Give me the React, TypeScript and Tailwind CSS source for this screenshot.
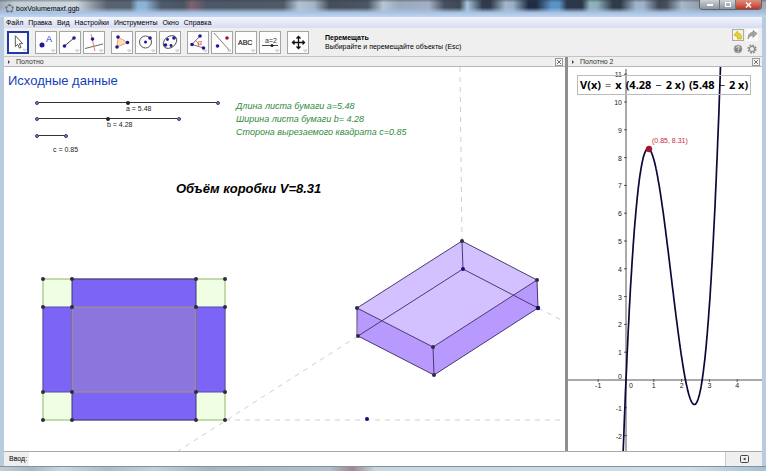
import { useState } from "react";
import type { ReactNode } from "react";

const menu = ["Файл", "Правка", "Вид", "Настройки", "Инструменты", "Окно", "Справка"];

const BLUE = "#1c1a94";
const LINE = "#444";

interface Tool {
  name: string;
  icon: ReactNode;
}

const Dot = ({ x, y, fill = BLUE, r = 1.8 }: { x: number; y: number; fill?: string; r?: number }) => (
  <circle cx={x} cy={y} r={r} fill={fill} />
);

const toolGroups: Tool[][] = [
  [{ name: "Перемещать", icon: <path d="M8 4v12l2.700-2.400 1.900 4.200 1.800-.9-1.900-4 3.700-.2z" fill="#fff" stroke="#333" strokeWidth="0.9" /> }],
  [
    {
      name: "Точка",
      icon: (
        <>
          <Dot x={7} y={14} r={2.5} />
          <text x="11" y="11" fontSize="9" fill="#2a2ae0">A</text>
        </>
      ),
    },
    {
      name: "Прямая",
      icon: (
        <>
          <path d="M5.500 15 15 7" stroke={LINE} />
          <Dot x={5.5} y={15} />
          <Dot x={15} y={7} />
        </>
      ),
    },
    {
      name: "Перпендикуляр",
      icon: (
        <>
          <path d="M2 17.500 20 13" stroke={LINE} strokeWidth="0.8" />
          <path d="M8 3l4 17" stroke="#e0606a" strokeWidth="0.8" />
          <Dot x={9.5} y={8} />
        </>
      ),
    },
  ],
  [
    {
      name: "Многоугольник",
      icon: (
        <>
          <path d="M7 6l9.500 5.500L6 16z" fill="#ffe0b0" stroke="#e08a70" strokeWidth="0.8" />
          <Dot x={7} y={6} />
          <Dot x={16.5} y={11.5} />
          <Dot x={6} y={16} />
        </>
      ),
    },
    {
      name: "Окружность",
      icon: (
        <>
          <circle cx="10.500" cy="11" r="6" fill="none" stroke={LINE} strokeWidth="0.9" />
          <Dot x={10.5} y={11} r={1.5} />
          <Dot x={15} y={7} />
        </>
      ),
    },
    {
      name: "Эллипс",
      icon: (
        <>
          <ellipse cx="11" cy="11" rx="7.500" ry="5.500" transform="rotate(-40 11 11)" fill="none" stroke={LINE} strokeWidth="0.9" />
          <Dot x={6.5} y={14} />
          <Dot x={12} y={14.5} r={1.4} />
          <Dot x={15} y={7} />
          <Dot x={8.5} y={8.5} r={1.4} />
        </>
      ),
    },
  ],
  [
    {
      name: "Угол",
      icon: (
        <>
          <path d="M13 5 5 13.500l12 3.500" fill="none" stroke="#555" strokeWidth="0.8" />
          <path d="M8.500 9.500q3.500 1.500 3 6" fill="none" stroke="#e05050" strokeWidth="0.8" />
          <text x="11" y="13.500" fontSize="7" fill="#d33">α</text>
          <Dot x={13} y={5} />
          <Dot x={5} y={13.5} />
          <Dot x={16.5} y={17} />
        </>
      ),
    },
    {
      name: "Отражение",
      icon: (
        <>
          <path d="M3 2l16 18" stroke="#666" strokeWidth="0.8" />
          <Dot x={6.5} y={15} />
          <Dot x={16} y={7} fill="#a01838" />
        </>
      ),
    },
    {
      name: "Текст",
      icon: <text x="3" y="13.500" fontSize="7" fill="#222" stroke="#222" strokeWidth="0.2">ABC</text>,
    },
    {
      name: "Ползунок",
      icon: (
        <>
          <text x="6" y="11.500" fontSize="7" fill="#333">a=2</text>
          <path d="M3 14.500h16" stroke="#333" strokeWidth="0.9" />
          <Dot x={13} y={14.5} r={1.5} fill="#222" />
        </>
      ),
    },
  ],
  [
    {
      name: "Переместить полотно",
      icon: (
        <path
          d="M11.500 6v11M6 11.500h11M9.500 7.500l2-2 2 2M9.500 15.500l2 2 2-2M7.500 9.500l-2 2 2 2M15.500 9.500l2 2-2 2"
          fill="none"
          stroke="#111"
          strokeWidth="1.3"
        />
      ),
    },
  ],
];

const sliders = [
  { id: "a", label: "a = 5.48", min: 0, max: 10.96, value: 5.48, box: "left-[33px] top-[31px] w-[181px]", text: "left-[122px] top-[37px]", thumb: true },
  { id: "b", label: "b = 4.28", min: 0, max: 8.56, value: 4.28, box: "left-[33px] top-[47px] w-[142px]", text: "left-[103px] top-[53px]", thumb: true },
  { id: "c", label: "c = 0.85", min: 0, max: 0.85, value: 0.85, box: "left-[33px] top-[64px] w-[29px]", text: "left-[49px] top-[78px]", thumb: false },
];

// net of the box: outer sheet and the four cut lines
const NX = [39, 68, 192, 221];
const NY = [212, 240, 325, 353];

const boxPoints = [
  [458, 174], [533, 213], [534, 241], [353, 241],
  [354, 269], [429, 280], [430, 308],
];

// graph axes, pixels per unit
const OX = 58;
const OY = 313;
const UNIT = 27.8;

const volume = (x: number) => x * (4.28 - 2 * x) * (5.48 - 2 * x);

const curve = Array.from({ length: 186 }, (_, i) => {
  const x = -0.2 + i * 0.02;
  return `${(OX + x * UNIT).toFixed(1)},${(OY - volume(x) * UNIT).toFixed(1)}`;
}).join(" ");

function PanelHeader({ title }: { title: string }) {
  return (
    <div className="flex h-[10px] shrink-0 items-center border-b border-[#b8b8b8] bg-[#efefef] pr-0.5 pl-1 text-[7px] leading-none text-[#333]">
      <span className="mr-1.5 h-0 w-0 border-y-2 border-l-2 border-y-transparent border-l-[#444]" />
      <h2>{title}</h2>
      <button aria-label="Закрыть" className="ml-auto flex h-2 w-2 items-center justify-center border border-[#999] bg-[#f6f6f6]">
        <svg width="4" height="4" viewBox="0 0 4 4">
          <path d="M0 0l4 4M4 0L0 4" stroke="#333" strokeWidth="0.7" />
        </svg>
      </button>
    </div>
  );
}

function TitleBar() {
  return (
    <header className="relative flex h-[17px] shrink-0 items-start">
      <div className="absolute inset-0 bg-[linear-gradient(90deg,#9aa7b4_0%,#c3cdd6_2%,#cdd7df_10%,#8f9aa6_12%,#59636f_14%,#566373_17%,#8bb3d6_18%,#8bb3d6_19%,#4f5b6b_21%,#4a5564_24%,#80626f_25%,#4c5767_27%,#505a67_37%,#b3c3d2_39%,#a4b4c4_41%,#454e5b_43%,#4b5563_48%,#b8c6d4_50%,#9baabd_52%,#a3afc4_56%,#46505e_58%,#3e4856_60%,#a7c6dd_61%,#303b4d_63%,#303b4d_64%,#a4b6cb_66%,#98aec8_67%,#202c43_69%,#202c43_70%,#5b93c6_72%,#5b93c6_73%,#2b384c_74%,#2b384c_76%,#90b4bb_77%,#8aacb7_78%,#303b49_80%,#303b49_81%,#9fb3ca_83%,#9fb3ca_84%,#3e4854_86%,#464f5a_87%,#a8b8c8_89%,#7e8a98_93%,#a2adba_100%)]" />
      <div className="absolute inset-0 bg-[linear-gradient(180deg,#30384066_0%,transparent_15%,transparent_45%,#a8c3e4_75%,#c2d5ed_100%)]" />
      <div className="relative flex w-full items-start pl-[5px]">
        <svg width="9" height="9" viewBox="0 0 9 9" className="mt-1">
          <circle cx="4.500" cy="4.500" r="3.300" fill="none" stroke="#7a838c" strokeWidth="1" />
          <g fill="#69727c">
            <circle cx="4.500" cy="1.200" r="1.100" />
            <circle cx="7.700" cy="3.500" r="1.100" />
            <circle cx="6.500" cy="7.300" r="1.100" />
            <circle cx="2.500" cy="7.300" r="1.100" />
            <circle cx="1.300" cy="3.500" r="1.100" />
          </g>
        </svg>
        <h1 className="mt-1 ml-0.5 text-[7px] leading-[9px] text-black">boxVolumemaxf.ggb</h1>
        <div className="mr-1 ml-auto flex h-[10px] overflow-hidden rounded-b-sm border border-t-0 border-[#5d646c]">
          <button aria-label="Свернуть" className="flex w-5 items-center justify-center border-r border-[#70757b] bg-linear-to-b from-[#cdd2d7] to-[#8c949c]">
            <span className="h-0.5 w-1.5 bg-white" />
          </button>
          <button aria-label="Развернуть" className="flex w-4 items-center justify-center border-r border-[#70757b] bg-linear-to-b from-[#cdd2d7] to-[#8c949c]">
            <span className="h-[5px] w-1.5 border border-white" />
          </button>
          <button aria-label="Закрыть окно" className="flex w-[25px] items-center justify-center bg-linear-to-b from-[#dc8d80] to-[#c22f1e]">
            <svg width="7" height="6" viewBox="0 0 7 6">
              <path d="M1 .5l5 5M6 .5l-5 5" stroke="#fff" strokeWidth="1.500" />
            </svg>
          </button>
        </div>
      </div>
    </header>
  );
}

function Toolbar() {
  const [active, setActive] = useState("Перемещать");

  return (
    <div className="flex h-[29px] shrink-0 items-center border-b border-[#c4c4c4] bg-[#efefef] pr-1 pl-[3px]">
      <div className="flex gap-1.5">
        {toolGroups.map((group, i) => (
          <div key={i} className="flex gap-0.5">
            {group.map((tool) => (
              <button
                key={tool.name}
                aria-label={tool.name}
                onClick={() => setActive(tool.name)}
                className={
                  active === tool.name
                    ? "h-[23px] w-[22px] border-2 border-[#2236ae] bg-white"
                    : "h-[23px] w-[22px] border border-[#a5a5a5] bg-[#fdfdfd]"
                }
              >
                <svg viewBox="1 1 20 21" className="h-full w-full">
                  {tool.icon}
                  <path d="M16.500 19h3.500l-1.700 2z" fill="#fff" stroke="#999" strokeWidth="0.500" />
                </svg>
              </button>
            ))}
          </div>
        ))}
      </div>
      <div className="ml-4 text-[7px] leading-[9px] text-black">
        <p className="font-bold">Перемещать</p>
        <p>Выбирайте и перемещайте объекты (Esc)</p>
      </div>
      <div className="ml-auto grid grid-cols-2 gap-x-0.5 gap-y-0.5">
        <button aria-label="Отменить" className="h-3 w-3 border border-[#aaa] bg-[#f7f5df]">
          <svg viewBox="0 0 10 10">
            <path d="M1 5l3.500-4v2.200C8 3 9 5.500 8.500 9H4.500V7z" fill="#ead22d" stroke="#b99f28" strokeWidth="0.600" />
          </svg>
        </button>
        <button aria-label="Повторить" className="h-3 w-3 bg-[#fafafa]">
          <svg viewBox="0 0 12 12">
            <path d="M11 4.500L7 1.500v2C3.500 3.500 2 6 2 10c1-2.500 2.500-3.500 5-3.500v2z" fill="#a5a5a5" stroke="#777" strokeWidth="0.600" />
          </svg>
        </button>
        <button aria-label="Помощь" className="h-3 w-3">
          <svg viewBox="0 0 12 12">
            <circle cx="6" cy="6" r="4" fill="#858585" stroke="#aaa" />
            <path d="M4.700 4.800q0-1.300 1.400-1.300t1.300 1.200q0 .8-1.300 1.500v.6M6.100 7.800v1" fill="none" stroke="#fff" strokeWidth="0.900" />
          </svg>
        </button>
        <button aria-label="Параметры" className="h-3 w-3">
          <svg viewBox="0 0 12 12">
            <circle cx="6" cy="6" r="3.900" fill="none" stroke="#8c8c8c" strokeWidth="1.500" strokeDasharray="1.800 1.260" />
            <circle cx="6" cy="6" r="2.600" fill="#eee" stroke="#8c8c8c" strokeWidth="1.200" />
          </svg>
        </button>
      </div>
    </div>
  );
}

function BoxCanvas() {
  return (
    <div className="relative flex-1 overflow-hidden bg-white">
      <svg className="absolute inset-0 h-full w-full">
        <g stroke="#cfcfcf" strokeDasharray="5 5" fill="none">
          <path d="M456 0l2 174" />
          <path d="M354 269L174 384" />
          <path d="M534 241l66 34" />
          <path d="M221 353H1600" />
        </g>

        <g strokeWidth="1">
          <rect x={NX[0]} y={NY[0]} width={182} height={141} fill="#f0ffe3" stroke="#8fb860" />
          <rect x={NX[0]} y={NY[1]} width={182} height={85} fill="#7c64f6" stroke="#5a48b8" />
          <rect x={NX[1]} y={NY[0]} width={124} height={141} fill="#7c64f6" stroke="#3c3270" />
          <rect x={NX[1]} y={NY[1]} width={124} height={85} fill="#8b76de" stroke="#a89476" />
        </g>
        {NX.map((x) => NY.map((y) => <circle key={`${x}-${y}`} cx={x} cy={y} r="2" fill="#2f2a48" />))}

        <polygon points="353,241 458,174 533,213 534,241 430,308 354,269" fill="#d3c1ff" />
        <polygon points="353,241 429,280 533,213 534,241 430,308 354,269" fill="#b899fd" />
        <g stroke="#4b3a70" fill="none">
          <path d="M353 241L458 174L533 213L429 280z" />
          <path d="M354 269L459 202L534 241L430 308z" />
          <path d="M353 241v28M458 174l1 28M533 213l1 28M429 280l1 28" />
        </g>
        {boxPoints.map(([x, y]) => (
          <circle key={`${x}-${y}`} cx={x} cy={y} r="2" fill="#2f2a48" />
        ))}
        <circle cx="459" cy="202" r="2" fill="#180c80" />
        <circle cx="534" cy="241" r="2.200" fill="#180c60" />
        <circle cx="363" cy="352" r="2" fill="#180c80" />
      </svg>

      <p className="absolute top-1.5 left-1 text-[13px] leading-4 text-[#1740b8]">Исходные данные</p>

      {sliders.map((s) => (
        <div key={s.id}>
          <div className={`absolute flex h-[9px] items-center ${s.box}`}>
            <input
              id={s.id}
              type="range"
              min={s.min}
              max={s.max}
              step="0.01"
              defaultValue={s.value}
              className={
                s.thumb
                  ? "h-px w-full appearance-none bg-[#333] [&::-webkit-slider-thumb]:h-1 [&::-webkit-slider-thumb]:w-1 [&::-webkit-slider-thumb]:appearance-none [&::-webkit-slider-thumb]:rounded-full [&::-webkit-slider-thumb]:bg-[#222]"
                  : "h-px w-full appearance-none bg-[#333] [&::-webkit-slider-thumb]:h-1 [&::-webkit-slider-thumb]:w-1 [&::-webkit-slider-thumb]:appearance-none"
              }
            />
            <span className="pointer-events-none absolute -left-0.5 h-1 w-1 rounded-full border border-[#3b3b78] bg-[#8080c0]" />
            <span className="pointer-events-none absolute -right-0.5 h-1 w-1 rounded-full border border-[#3b3b78] bg-[#8080c0]" />
          </div>
          <label htmlFor={s.id} className={`absolute text-[7px] leading-[9px] text-[#222] ${s.text}`}>
            {s.label}
          </label>
        </div>
      ))}

      <div className="absolute top-[33px] left-[232px] text-[9px] leading-[13px] whitespace-nowrap text-[#2f8a3c] italic">
        <p>Длина листа бумаги a=5.48</p>
        <p>Ширина листа бумаги b= 4.28</p>
        <p>Сторона вырезаемого квадрата c=0.85</p>
      </div>

      <p className="absolute top-[114px] left-[172px] text-[13px] leading-4 font-bold whitespace-nowrap text-black italic">
        Объём коробки V=8.31
      </p>
    </div>
  );
}

function GraphCanvas() {
  return (
    <div className="relative flex-1 overflow-hidden bg-white">
      <svg className="absolute inset-0 h-full w-full" fontSize="7" fill="#222">
        <path d={`M0 ${OY}H1600M${OX} 2V1600`} stroke="#555" />
        {[-1, 1, 2, 3, 4].map((n) => (
          <g key={n}>
            <path d={`M${OX + n * UNIT} ${OY - 1}v3`} stroke="#555" />
            <text x={OX + n * UNIT} y={OY + 8} textAnchor="middle">{n}</text>
          </g>
        ))}
        <text x={OX + 5} y={OY + 8} textAnchor="middle">0</text>
        <text x={OX - 4} y={OY - 1} textAnchor="end">0</text>
        {[-2, -1, 1, 2, 3, 4, 5, 6, 7, 8, 9, 10, 11].map((n) => (
          <g key={n}>
            <path d={`M${OX - 2} ${OY - n * UNIT}h3`} stroke="#555" />
            <text x={OX - 4} y={OY - n * UNIT + 3} textAnchor="end">{n}</text>
          </g>
        ))}
        <polyline points={curve} fill="none" stroke="#0c0838" strokeWidth="1.700" />
        <circle cx="81" cy="82" r="3" fill="#b0102c" stroke="#70102c" strokeWidth="0.500" />
        <text x="84" y="76" fill="#c82a40">(0.85, 8.31)</text>
      </svg>
      <p className="absolute top-2 left-[9px] flex gap-1 border border-[#bbb] px-0.5 font-['Open_Sans','Noto_Sans',sans-serif] text-[11px] leading-[18px] font-bold whitespace-nowrap text-black">
        <span>V(x)</span>
        <span className="font-normal">=</span>
        <span>x</span>
        <span>(4.28</span>
        <span className="font-normal">−</span>
        <span>2 x)</span>
        <span>(5.48</span>
        <span className="font-normal">−</span>
        <span>2 x)</span>
      </p>
    </div>
  );
}

export default function App() {
  return (
    <div className="flex h-screen flex-col bg-[#b9cbdf] font-['Liberation_Sans',Arial,sans-serif]">
      <TitleBar />
      <div className="mx-1 flex min-h-0 flex-1 flex-col">
        <nav className="flex h-[11px] shrink-0 items-center gap-[5px] bg-linear-to-b from-[#f4f6fc] to-[#d6dcf2] pl-0.5 text-[7px] leading-none text-black">
          {menu.map((item) => (
            <button key={item}>{item}</button>
          ))}
        </nav>
        <Toolbar />
        <main className="flex min-h-0 flex-1">
          <section className="flex min-w-0 flex-1 flex-col">
            <PanelHeader title="Полотно" />
            <BoxCanvas />
          </section>
          <div className="w-[3px] bg-[#8f8f8f]" />
          <section className="flex w-[194px] shrink-0 flex-col">
            <PanelHeader title="Полотно 2" />
            <GraphCanvas />
          </section>
        </main>
        <div className="flex h-[15px] shrink-0 items-center border-t border-[#aaa] bg-[#efefef] pl-[5px] text-[7px]">
          <label htmlFor="command">Ввод:</label>
          <input id="command" type="text" className="ml-0.5 h-full min-w-0 flex-1 border-r border-[#ccc] bg-white px-1 outline-none" />
          <button aria-label="Справка по командам" className="flex w-9 items-center justify-center">
            <svg width="9" height="8" viewBox="0 0 9 8">
              <rect x="0.500" y="0.500" width="8" height="7" rx="1" fill="none" stroke="#444" />
              <path d="M5.500 2.500v3L3 4z" fill="#333" />
            </svg>
          </button>
        </div>
      </div>
      <div className="h-[5px] shrink-0 border-t border-[#7b94a8] bg-[linear-gradient(90deg,#c3ced8_0%,#a9b6c2_4%,#ccd6de_8%,#aebac5_14%,#c4cfd8_20%,#a9b4c0_27%,#b4bfca_43%,#a3868c_46%,#cbd6df_49%,#d2dce5_90%,#a8c0d0_100%)]" />
    </div>
  );
}
